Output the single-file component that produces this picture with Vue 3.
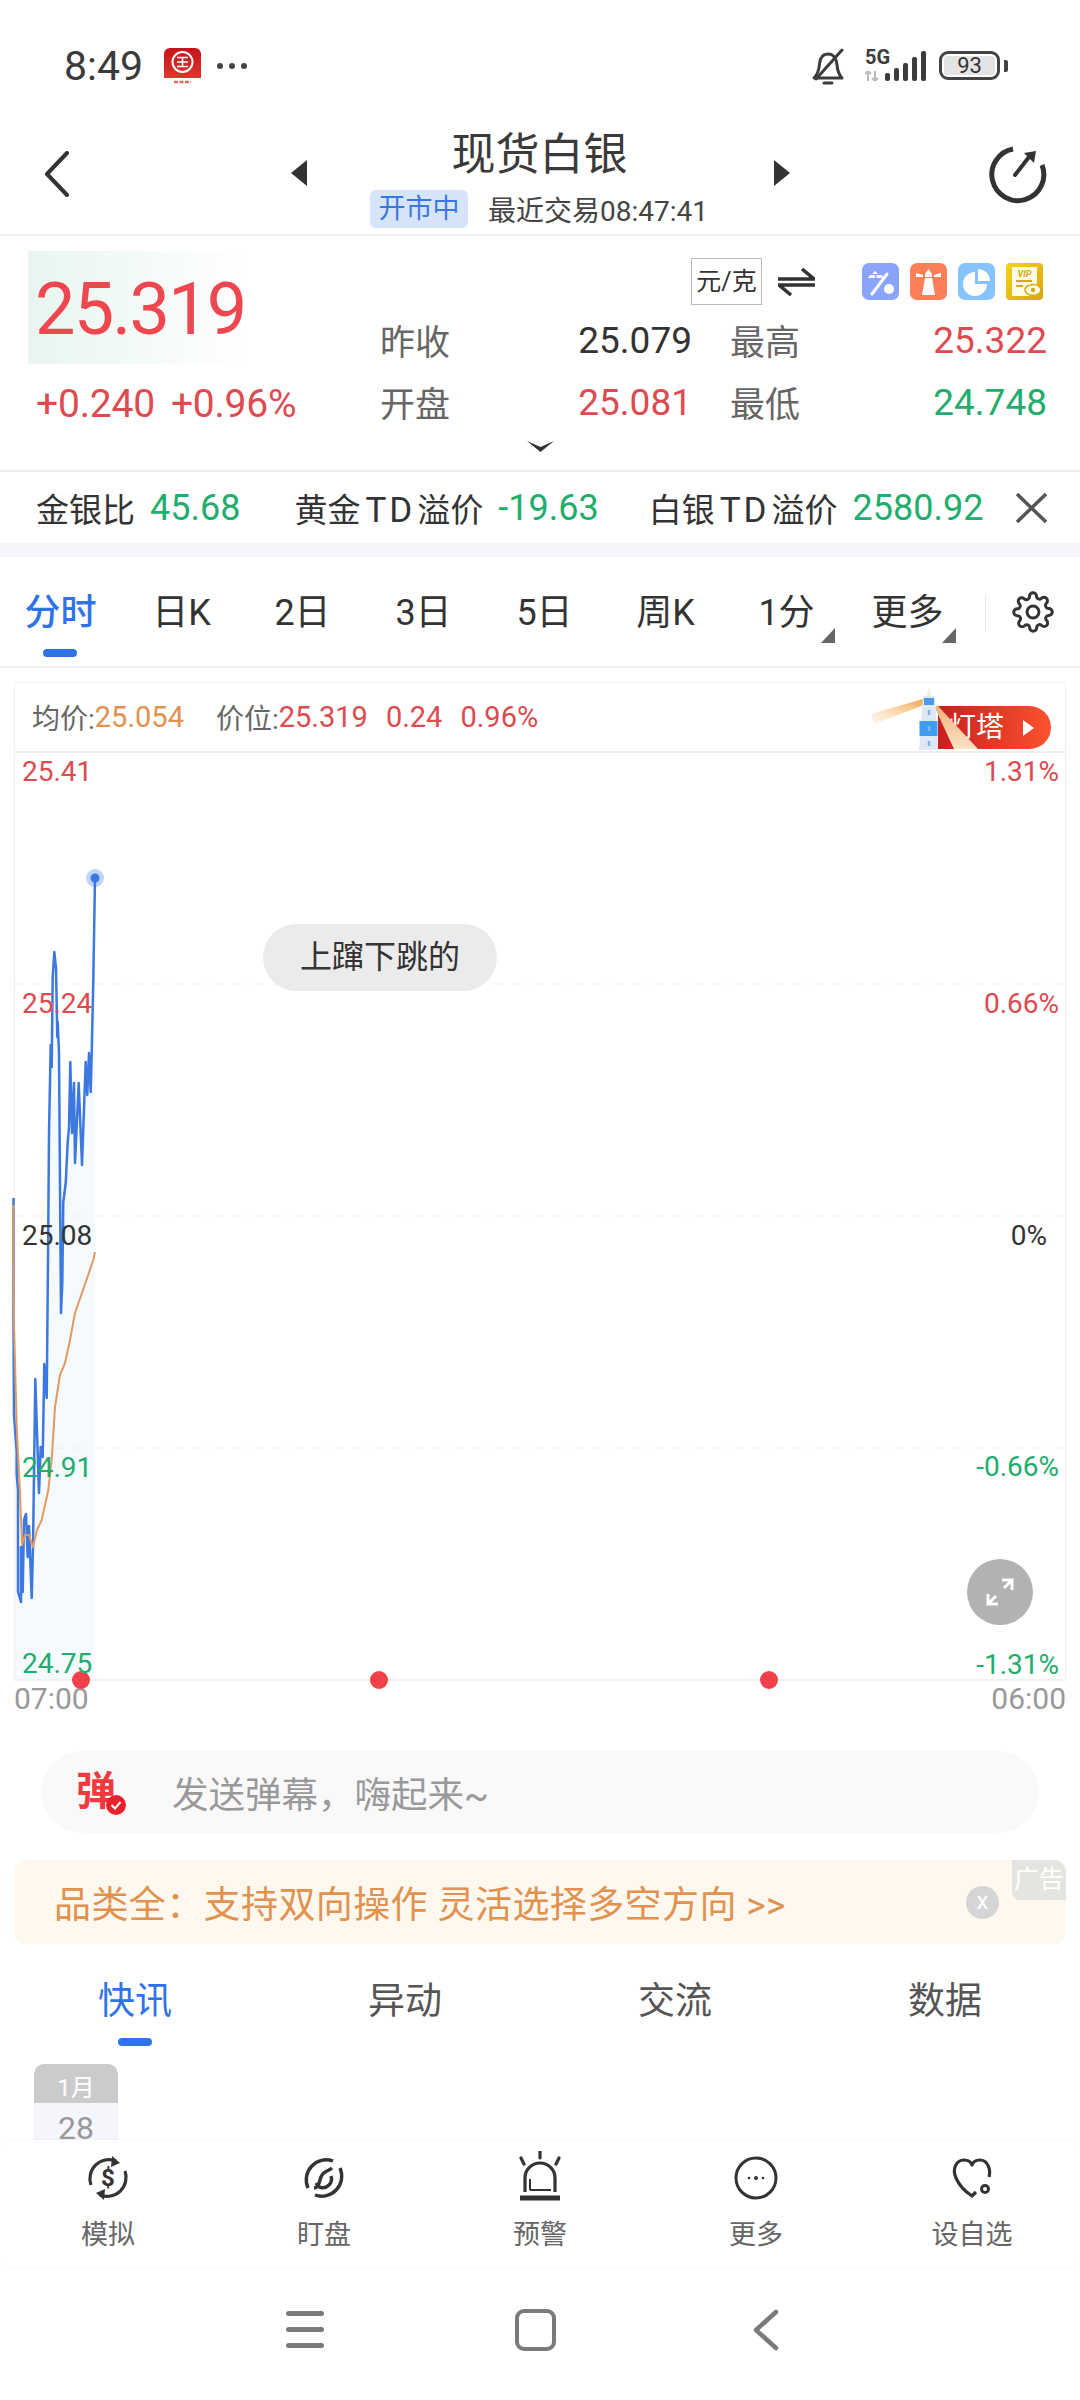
<template>
  <div class="page">
    <!-- 状态栏 -->
    <div class="status">
      <span class="clock">8:49</span>
      <svg class="app-icon" width="37" height="37" viewBox="0 0 37 37">
        <defs>
          <linearGradient id="appRed" x1="0" y1="0" x2="0" y2="1">
            <stop offset="0" stop-color="#c8101a" />
            <stop offset="1" stop-color="#d93a2c" />
          </linearGradient>
        </defs>
        <path d="M6 0H31A6 6 0 0 1 37 6V30H0V6A6 6 0 0 1 6 0Z" fill="url(#appRed)" />
        <circle cx="18.5" cy="14" r="10" fill="none" stroke="#fff" stroke-width="2" />
        <path d="M13 9.5H24M13 14H24M13 18.5H24M18.5 9.5V18.5" stroke="#fff" stroke-width="1.6" fill="none" />
        <path d="M10 34H27" stroke="#e3685c" stroke-width="2.4" stroke-dasharray="4 1.5" />
      </svg>
      <span class="dots"><i></i><i></i><i></i></span>
      <div class="status-right">
        <svg width="36" height="38" viewBox="0 0 36 38" fill="none" stroke="#3c3c3c" stroke-width="3" stroke-linecap="round" stroke-linejoin="round">
          <path d="M3 30H31C27 26 26.500 22 26 17C25.500 10 22 6 17 6C12 6 9 10 8.500 16C8 22 7 26 3 30Z" />
          <path d="M13 35H21" />
          <path d="M5 31L31 2" />
        </svg>
        <div class="net">
          <div class="net-type">
            <b>5G</b>
            <svg width="14" height="10" viewBox="0 0 14 10"><path d="M3 10V0M0 3L3 0L6 3M10 0V10M7 7L10 10L13 7" stroke="#bbb" stroke-width="2" fill="none" /></svg>
          </div>
          <div class="bars"><i class="b1"></i><i class="b2"></i><i class="b3"></i><i class="b4"></i><i class="b5"></i></div>
        </div>
        <div class="battery"><span>93</span></div>
        <i class="battery-nub"></i>
      </div>
    </div>

    <!-- 标题栏 -->
    <div class="nav">
      <svg class="back" width="26" height="46" viewBox="0 0 26 46" fill="none" stroke="#333" stroke-width="4" stroke-linecap="round" stroke-linejoin="round"><path d="M23 2L3 23L23 44" /></svg>
      <i class="tri tri-left"></i>
      <div class="nav-center">
        <div class="title">现货白银</div>
        <div class="subtitle">
          <span class="state">开市中</span>
          <span class="last">最近交易08:47:41</span>
        </div>
      </div>
      <i class="tri tri-right"></i>
      <svg class="refresh" width="58" height="58" viewBox="0 0 58 58" fill="none" stroke="#333" stroke-width="5">
        <path d="M24 3A26 26 0 1 0 53 19" />
        <path d="M26 29L40 11" stroke-width="4" stroke-linecap="round" />
        <path d="M35 7L47 5L45 17Z" fill="#333" stroke="none" />
      </svg>
    </div>

    <!-- 行情 -->
    <div class="quote">
      <div class="quote-left">
        <div class="price-box"><span class="price">25.319</span></div>
        <div class="change">
          <span>+0.240</span>
          <span>+0.96%</span>
        </div>
      </div>
      <div class="quote-right">
        <div class="tools">
          <span class="unit">元/克</span>
          <svg class="swap" width="37" height="28" viewBox="0 0 37 28" fill="none" stroke="#333" stroke-width="3.500">
            <path d="M0 11H36L24 1" />
            <path d="M37 17H1L13 27" />
          </svg>
          <div class="tool-icons">
            <svg width="37" height="37" viewBox="0 0 37 37">
              <rect width="37" height="37" rx="7" fill="#8aa4fb" />
              <path d="M13 8L16 11H10ZM8 12H13V15H6ZM14.500 12H20L21 15H14.500Z" fill="#fff" />
              <path d="M25 11L10 31" stroke="#fff" stroke-width="3" stroke-linecap="round" />
              <circle cx="27" cy="26" r="5" fill="#fff" />
            </svg>
            <svg width="37" height="37" viewBox="0 0 37 37">
              <rect width="37" height="37" rx="7" fill="#fb7f57" />
              <path d="M18.500 6L22 11V14H15V11Z" fill="#fff" />
              <path d="M15 15H22L25 32H12Z" fill="#fff" />
              <path d="M6 10L13 12V14L6 14ZM31 10L24 12V14L31 14Z" fill="#fff" />
            </svg>
            <svg width="37" height="37" viewBox="0 0 37 37">
              <rect width="37" height="37" rx="7" fill="#87c3fd" />
              <path d="M17 9V21H29A12 12 0 1 1 17 9Z" fill="#fff" />
              <path d="M20 6A12 12 0 0 1 32 18H20Z" fill="#fff" />
            </svg>
            <svg width="37" height="37" viewBox="0 0 37 37">
              <defs>
                <linearGradient id="vipGold" x1="0" y1="0" x2="1" y2="1">
                  <stop offset="0" stop-color="#f6d21c" />
                  <stop offset="1" stop-color="#d8a70d" />
                </linearGradient>
              </defs>
              <rect width="37" height="37" rx="4" fill="url(#vipGold)" />
              <rect x="6" y="4" width="25" height="29" fill="#fffbe6" />
              <text x="18.500" y="14" font-size="9" font-weight="700" font-style="italic" text-anchor="middle" fill="#d8a70d" font-family="Roboto">VIP</text>
              <path d="M10 18H26M10 23H17" stroke="#d8a70d" stroke-width="1.800" />
              <ellipse cx="27" cy="27" rx="8" ry="5.500" fill="#fffbe6" stroke="#d8a70d" stroke-width="1.500" />
              <circle cx="27" cy="27" r="2.200" fill="#d8a70d" />
            </svg>
          </div>
        </div>
        <div class="stats">
          <template v-for="s in stats" :key="s.label">
            <span class="stat-label">{{ s.label }}</span>
            <span class="stat-value" :class="s.color">{{ s.value }}</span>
          </template>
        </div>
      </div>
      <svg class="expand-more" width="27" height="11" viewBox="0 0 27 11"><path d="M0 0L13.500 6L27 0L13.500 11Z" fill="#333" /></svg>
    </div>

    <!-- 比价 -->
    <div class="ratio">
      <span class="ratio-label">金银比</span><span class="ratio-value first">45.68</span>
      <span class="ratio-label">黄金<span class="td">TD</span>溢价</span><span class="ratio-value">-19.63</span>
      <span class="ratio-label">白银<span class="td">TD</span>溢价</span><span class="ratio-value">2580.92</span>
      <svg class="ratio-close" width="31" height="30" viewBox="0 0 31 30" stroke="#555" stroke-width="3.500" fill="none"><path d="M1 1L30 29M30 1L1 29" /></svg>
    </div>
    <div class="band"></div>

    <!-- 周期 -->
    <div class="periods">
      <div class="period-list">
        <span v-for="p in periods" :key="p.text" class="period" :class="{ active: p.active, drop: p.drop }">{{ p.text }}</span>
      </div>
      <i class="period-sep"></i>
      <svg class="gear" width="42" height="44" viewBox="0 0 24 24" fill="none" stroke="#333" stroke-width="1.700" stroke-linejoin="round">
        <circle cx="12" cy="12" r="3.400" />
        <path d="M19.400 15a1.650 1.650 0 0 0 .33 1.820l.06.06a2 2 0 1 1-2.830 2.830l-.06-.06a1.650 1.650 0 0 0-2.800 1.170V21a2 2 0 0 1-4 0v-.09a1.650 1.650 0 0 0-2.830-1.120l-.06.06a2 2 0 1 1-2.830-2.830l.06-.06a1.650 1.650 0 0 0-1.170-2.800H3a2 2 0 0 1 0-4h.09a1.650 1.650 0 0 0 1.120-2.830l-.06-.06a2 2 0 1 1 2.830-2.830l.06.06a1.650 1.650 0 0 0 1.820.33H9a1.650 1.650 0 0 0 1-1.510V3a2 2 0 0 1 4 0v.09a1.650 1.650 0 0 0 2.800 1.120l.06-.06a2 2 0 1 1 2.830 2.830l-.06.06a1.650 1.650 0 0 0-.33 1.820V9a1.650 1.650 0 0 0 1.510 1H21a2 2 0 0 1 0 4h-.09a1.650 1.650 0 0 0-1.510 1z" />
      </svg>
    </div>

    <!-- 分时图 -->
    <div class="chart">
      <div class="chart-info">
        <span class="info-label">均价:</span><span class="orange">25.054</span>
        <span class="info-label second">价位:</span><span class="red">25.319</span>
        <span class="red info-gap">0.24</span>
        <span class="red info-gap">0.96%</span>
        <div class="tower-btn">
          <span>灯塔</span>
          <i class="tower-arrow"></i>
          <svg class="tower" width="160" height="62" viewBox="0 0 160 62">
            <defs>
              <linearGradient id="beamL" x1="1" y1="0" x2="0" y2="1">
                <stop offset="0" stop-color="#f2a64a" />
                <stop offset="1" stop-color="#fdf0de" stop-opacity="0.5" />
              </linearGradient>
              <linearGradient id="beamR" x1="0" y1="0" x2="0" y2="1">
                <stop offset="0" stop-color="#eeb07c" />
                <stop offset="1" stop-color="#fde3c4" />
              </linearGradient>
            </defs>
            <path d="M103 11L51 26L54 36L104 17Z" fill="url(#beamL)" />
            <path d="M115 20L134 61H158L117 17Z" fill="url(#beamR)" />
            <path d="M109 0L112 8H106Z" fill="#f4efe3" />
            <path d="M103 8H115L118 62H99Z" fill="#dfe9f5" />
            <rect x="104" y="10" width="10" height="7" fill="#4a9ceb" />
            <rect x="99.500" y="33" width="18" height="15" fill="#3f9cef" />
            <path d="M109 22V27M109 38V43M109 53V58" stroke="#7eb8ee" stroke-width="2.500" />
          </svg>
        </div>
      </div>
      <div class="plot">
        <svg class="plot-svg" width="1052" height="930" viewBox="14 751 1052 930">
          <polygon :points="areaPoints" fill="#f5faff" />
          <path d="M14.500 751V1681M1065.500 751V1681" stroke="#f0f0f0" stroke-width="1" />
          <path d="M14 752H1066" stroke="#eee" stroke-width="2" />
          <path v-for="y in gridLines" :key="y" :d="`M14 ${y}H1066`" stroke="#ececec" stroke-width="1" stroke-dasharray="9 11" />
          <path d="M14 1680H1066" stroke="#f0f0f0" stroke-width="2" />
          <polyline :points="bluePoints" fill="none" stroke="#3d78e0" stroke-width="2.500" stroke-linejoin="round" />
          <polyline :points="orangePoints" fill="none" stroke="#e29a60" stroke-width="2" stroke-linejoin="round" />
          <circle cx="95" cy="878" r="9" fill="#3d78e0" fill-opacity="0.32" />
          <circle cx="95" cy="878" r="4.500" fill="#3d78e0" />
          <circle v-for="x in redDots" :key="x" :cx="x" cy="1680" r="9" fill="#f2404a" />
        </svg>
        <span v-for="l in leftLabels" :key="l.text" class="axis axis-left" :class="l.color" :style="{ top: l.y - 765 + 'px' }">{{ l.text }}</span>
        <span v-for="l in rightLabels" :key="l.text" class="axis" :class="l.color" :style="{ top: l.y - 765 + 'px', right: l.right + 'px' }">{{ l.text }}</span>
        <div class="float-pill">上蹿下跳的</div>
        <div class="fullscreen">
          <svg width="30" height="30" viewBox="0 0 30 30" fill="none" stroke="#fff" stroke-width="3">
            <path d="M3 27L11 19M19 11L27 3M17 3H27V13M3 17V27H13" />
          </svg>
        </div>
      </div>
      <div class="time-axis"><span>07:00</span><span>06:00</span></div>
    </div>

    <!-- 弹幕 -->
    <div class="danmu">
      <span class="danmu-icon">弹
        <svg width="20" height="20" viewBox="0 0 20 20">
          <circle cx="10" cy="10" r="10" fill="#e8232b" />
          <path d="M5.500 10L9 13.500L14.500 7" stroke="#fff" stroke-width="2" fill="none" />
        </svg>
      </span>
      <span class="danmu-text">发送弹幕，嗨起来~</span>
    </div>

    <!-- 广告 -->
    <div class="ad">
      <span class="ad-text">品类全：支持双向操作 灵活选择多空方向 &gt;&gt;</span>
      <span class="ad-close">x</span>
      <span class="ad-tag">广告</span>
    </div>

    <!-- 资讯 -->
    <div class="news-tabs">
      <span v-for="t in newsTabs" :key="t" class="news-tab" :class="{ active: t === '快讯' }">{{ t }}</span>
    </div>
    <div class="news">
      <div class="date">
        <div class="date-month">1月</div>
        <div class="date-day">28</div>
      </div>
    </div>

    <!-- 底部工具栏 -->
    <div class="toolbar">
      <div class="tool">
        <svg width="46" height="46" viewBox="0 0 46 46" fill="none" stroke="#333" stroke-width="3.200">
          <path d="M6 30A19 19 0 0 1 31 6" />
          <path d="M40 16A19 19 0 0 1 15 40" />
          <path d="M27 1L35 8L26 12Z" fill="#333" stroke="none" />
          <path d="M19 45L11 38L20 34Z" fill="#333" stroke="none" />
          <text x="23" y="31" font-size="24" font-weight="700" text-anchor="middle" fill="#333" stroke="none" font-family="Roboto">$</text>
        </svg>
        <span>模拟</span>
      </div>
      <div class="tool">
        <svg width="46" height="46" viewBox="0 0 46 46" fill="none" stroke="#333" stroke-width="3.400">
          <path d="M32 6A20 20 0 0 0 7 33" />
          <path d="M14 40A20 20 0 0 0 39 13" />
          <path d="M13 33C18 33 18 27 20 22C22 16 28 16 31 13" />
          <path d="M15 28C18 34 24 34 28 30C31 27 31 24 30 21" />
        </svg>
        <span>盯盘</span>
      </div>
      <div class="tool">
        <svg class="alarm" width="46" height="50" viewBox="0 0 46 50" fill="none" stroke="#333" stroke-width="3.200">
          <path d="M23 0V7M4 7L7 13M42 7L39 13" stroke-linecap="round" />
          <path d="M8 41V27A15 15 0 0 1 38 27V41" />
          <path d="M13 39V28" stroke-width="2" />
          <path d="M13 39H34" stroke-width="2" />
          <path d="M3 47H43" stroke-width="5" />
        </svg>
        <span>预警</span>
      </div>
      <div class="tool">
        <svg width="46" height="46" viewBox="0 0 46 46" fill="none" stroke="#333" stroke-width="3">
          <circle cx="23" cy="23" r="20" />
          <circle cx="16" cy="23" r="1.300" fill="#333" stroke="none" />
          <circle cx="23" cy="23" r="2" fill="#333" stroke="none" />
          <circle cx="30" cy="23" r="1.300" fill="#333" stroke="none" />
        </svg>
        <span>更多</span>
      </div>
      <div class="tool">
        <svg width="46" height="46" viewBox="0 0 46 46" fill="none" stroke="#333" stroke-width="3.200" stroke-linejoin="round">
          <path d="M40 22C42 15 39 5 31 5C27 5 24 7 23 10C22 7 19 5 15 5C7 5 3 14 7 23C10 30 17 37 23 41L27 37" />
          <circle cx="36" cy="34" r="3.500" stroke-width="3" />
        </svg>
        <span>设自选</span>
      </div>
    </div>

    <!-- 系统导航 -->
    <div class="sys-nav">
      <div class="menu-icon"><i></i><i></i><i></i></div>
      <i class="home-icon"></i>
      <svg width="26" height="42" viewBox="0 0 26 42" fill="none" stroke="#7a7a7a" stroke-width="4.500" stroke-linecap="round" stroke-linejoin="round"><path d="M23 3L3 21L23 39" /></svg>
    </div>
  </div>
</template>

<script setup>
const stats = [
  { label: '昨收', value: '25.079', color: 'dark' },
  { label: '最高', value: '25.322', color: 'red' },
  { label: '开盘', value: '25.081', color: 'red' },
  { label: '最低', value: '24.748', color: 'green' }
]

const periods = [
  { text: '分时', active: true },
  { text: '日K' },
  { text: '2日' },
  { text: '3日' },
  { text: '5日' },
  { text: '周K' },
  { text: '1分', drop: true },
  { text: '更多', drop: true }
]

const newsTabs = ['快讯', '异动', '交流', '数据']

const gridLines = [984, 1216, 1448]
const redDots = [81, 379, 769]

const leftLabels = [
  { text: '25.41', y: 772, color: 'red' },
  { text: '25.24', y: 1004, color: 'red' },
  { text: '25.08', y: 1236, color: 'dark' },
  { text: '24.91', y: 1468, color: 'green' },
  { text: '24.75', y: 1664, color: 'green' }
]

const rightLabels = [
  { text: '1.31%', y: 772, color: 'red', right: 7 },
  { text: '0.66%', y: 1004, color: 'red', right: 7 },
  { text: '0%', y: 1236, color: 'dark', right: 19 },
  { text: '-0.66%', y: 1467, color: 'green', right: 7 },
  { text: '-1.31%', y: 1665, color: 'green', right: 7 }
]

// 价格线、均价线（页面坐标）
const blueLine = [
  [13.5, 1198], [13.5, 1323], [14, 1415], [16.7, 1452], [16.7, 1475], [18, 1490], [18, 1592],
  [21, 1602], [21, 1547], [22.7, 1592], [24, 1520], [26, 1514], [27.7, 1557], [29, 1526],
  [31.7, 1598], [33, 1547], [35.3, 1379], [39, 1493], [40.7, 1447], [42.7, 1457], [44.3, 1364],
  [45.7, 1387], [46.7, 1398], [48, 1260], [49, 1133], [50.7, 1045], [51.7, 1067], [52.7, 977],
  [54.3, 952], [56, 968], [57.3, 1037], [57.7, 1022], [59, 1053], [61, 1313], [62.3, 1283],
  [63.3, 1202], [65.7, 1183], [67.7, 1142], [69, 1127], [70.3, 1062], [72, 1133], [74, 1083],
  [75, 1163], [78.7, 1083], [82, 1165], [84.3, 1100], [85.7, 1062], [87.3, 1095], [89, 1053],
  [90.7, 1092], [91.7, 1053], [93.3, 980], [95, 878]
]

const orangeLine = [
  [13.5, 1205], [13.5, 1260], [14, 1323], [16.7, 1427], [20, 1493], [22, 1545], [25, 1535],
  [29, 1535], [33, 1547], [37, 1530], [41.7, 1520], [48.3, 1490], [51.7, 1460], [55, 1407],
  [60, 1375], [65, 1363], [70, 1340], [75, 1313], [83, 1290], [93.3, 1260], [95, 1252]
]

const toPoints = (line) => line.map(([x, y]) => `${x},${y}`).join(' ')

const bluePoints = toPoints(blueLine)
const orangePoints = toPoints(orangeLine)
const areaPoints = `${bluePoints} 95,1680 14,1680`
</script>

<style>
html,
body {
  margin: 0;
  background: #fff;
}
</style>

<style scoped>
.page {
  width: 1080px;
  height: 2400px;
  overflow: hidden;
  background: #fff;
  color: #333;
  font-family: Roboto, "Noto Sans CJK SC", sans-serif;
}

.red { color: #dd4a50; }
.green { color: #22ad6d; }
.dark { color: #333; }
.orange { color: #e2914f; }

/* 状态栏 */
.status {
  height: 100px;
  display: flex;
  align-items: flex-start;
  padding: 48px 72px 0 64px;
  box-sizing: border-box;
}

.clock {
  font-size: 41px;
  line-height: 37px;
  color: #3a3a3a;
  width: 100px;
}

.app-icon {
  flex: none;
}

.dots {
  display: flex;
  gap: 6px;
  margin: 15px 0 0 16px;
}

.dots i {
  width: 6px;
  height: 6px;
  border-radius: 50%;
  background: #444;
}

.status-right {
  margin-left: auto;
  display: flex;
  align-items: flex-start;
}

.net {
  display: flex;
  margin-left: 18px;
  align-items: flex-end;
  height: 33px;
}

.net-type {
  display: flex;
  flex-direction: column;
  width: 29px;
}

.net-type b {
  font-size: 20px;
  line-height: 19px;
  color: #3c3c3c;
  margin-bottom: 4px;
}

.bars {
  display: flex;
  align-items: flex-end;
  gap: 4px;
  margin-left: -9px;
  height: 33px;
}

.bars i {
  width: 5px;
  background: #3c3c3c;
  border-radius: 2px;
}

.b1 { height: 8px; }
.b2 { height: 13px; }
.b3 { height: 18px; }
.b4 { height: 24px; }
.b5 { height: 30px; }

.battery {
  width: 61px;
  height: 29px;
  box-sizing: border-box;
  border: 3px solid #444;
  border-radius: 9px;
  padding: 2px;
  margin: 3px 0 0 13px;
  display: flex;
}

.battery span {
  flex: 1;
  background: #e4e4e4;
  border-radius: 3px;
  font-size: 22px;
  line-height: 19px;
  text-align: center;
  color: #333;
}

.battery-nub {
  width: 4px;
  height: 12px;
  margin: 12px 0 0 4px;
  background: #444;
  border-radius: 0 2px 2px 0;
}

/* 标题栏 */
.nav {
  height: 136px;
  box-sizing: border-box;
  border-bottom: 2px solid #f2f2f2;
  display: flex;
  align-items: flex-start;
  position: relative;
}

.back {
  margin: 51px 0 0 44px;
}

.tri {
  width: 0;
  height: 0;
  border-top: 13px solid transparent;
  border-bottom: 13px solid transparent;
  margin-top: 60px;
}

.tri-left {
  border-right: 16px solid #333;
  margin-left: 221px;
}

.tri-right {
  border-left: 16px solid #333;
}

.nav-center {
  width: 467px;
  display: flex;
  flex-direction: column;
  align-items: center;
  padding-top: 29px;
}

.title {
  font-size: 44px;
  line-height: 52px;
  color: #3a3a3a;
  margin-left: -2px;
}

.subtitle {
  display: flex;
  align-items: center;
  margin: 8px 0 0 -3px;
}

.state {
  width: 98px;
  height: 38px;
  border-radius: 6px;
  background: #d6e4fa;
  color: #3a78dc;
  font-size: 27px;
  line-height: 38px;
  text-align: center;
}

.last {
  font-size: 28px;
  margin-left: 20px;
  color: #444;
}

.refresh {
  margin: 46px 0 0 199px;
}

/* 行情 */
.quote {
  height: 236px;
  box-sizing: border-box;
  border-bottom: 2px solid #ececec;
  display: flex;
  position: relative;
}

.quote-left {
  width: 380px;
  padding: 15px 0 0 28px;
  box-sizing: border-box;
}

.price-box {
  width: 220px;
  height: 113px;
  background: linear-gradient(90deg, #e8f6ef, #fff);
  padding: 2px 0 0 7px;
  box-sizing: border-box;
}

.price {
  font-size: 72px;
  letter-spacing: -1.800px;
  line-height: 113px;
  color: #ef474f;
}

.change {
  display: flex;
  gap: 16px;
  padding: 18px 0 0 8px;
  font-size: 39px;
  line-height: 44px;
  letter-spacing: -0.2px;
  color: #dd4a50;
}

.quote-right {
  width: 667px;
}

.tools {
  display: flex;
  align-items: center;
  height: 47px;
  margin-top: 22px;
  padding-left: 311px;
}

.unit {
  width: 71px;
  height: 47px;
  box-sizing: border-box;
  border: 1px solid #bbb;
  font-size: 25px;
  line-height: 45px;
  text-align: center;
  color: #333;
}

.swap {
  margin-left: 16px;
}

.tool-icons {
  display: flex;
  gap: 11px;
  margin-left: 47px;
}

.stats {
  display: grid;
  grid-template-columns: 101px 211px 108px 247px;
  grid-template-rows: 62px 62px;
  column-gap: 0;
  margin-top: 3px;
  align-items: center;
}

.stat-label {
  font-size: 35px;
  color: #666;
}

.stat-label:nth-child(4n + 3) {
  margin-left: 38px;
}

.stat-value {
  font-size: 37px;
  text-align: right;
  padding-top: 2px;
}

.stats .stat-label:nth-child(4n + 3) {
  grid-column: 3;
}

.expand-more {
  position: absolute;
  left: 527px;
  top: 205px;
}

/* 比价 */
.ratio {
  height: 71px;
  display: flex;
  align-items: center;
  padding: 0 33px 0 36px;
  font-size: 33px;
}

.ratio-label {
  color: #333;
  white-space: nowrap;
}

.td {
  font-size: 35px;
  letter-spacing: 3px;
  margin: 0 2px 0 5px;
}

.ratio-value {
  font-size: 36px;
  color: #22ad6d;
  margin: 0 50px 0 15px;
}

.ratio-value.first {
  margin-right: 54px;
}

.ratio-value:nth-of-type(6) {
  margin-right: 0;
}

.ratio-close {
  margin-left: auto;
}

.band {
  height: 14px;
  background: #f5f6fb;
}

/* 周期 */
.periods {
  height: 111px;
  box-sizing: border-box;
  border-bottom: 2px solid #f2f2f2;
  display: flex;
  align-items: flex-start;
}

.period-list {
  display: grid;
  grid-template-columns: repeat(8, 121px);
  padding-top: 32px;
}

.period {
  position: relative;
  font-size: 36px;
  line-height: 48px;
  text-align: center;
  color: #333;
}

.period.active {
  color: #2f74e6;
  font-weight: 500;
}

.period.active::after {
  content: '';
  position: absolute;
  left: 43px;
  top: 60px;
  width: 34px;
  height: 8px;
  border-radius: 4px;
  background: #2f74e6;
}

.period.drop::after {
  content: '';
  position: absolute;
  right: 12px;
  bottom: -6px;
  width: 14px;
  height: 15px;
  background: #666;
  clip-path: polygon(100% 0, 100% 100%, 0 100%);
}

.period-sep {
  width: 1px;
  height: 36px;
  margin: 38px 0 0 17px;
  background: #e8e8e8;
}

.gear {
  margin: 33px 0 0 26px;
}

/* 分时图 */
.chart {
  margin: 14px 14px 0;
}

.chart-info {
  height: 69px;
  box-sizing: border-box;
  border: 1px solid #f0f0f0;
  border-bottom: none;
  display: flex;
  align-items: center;
  padding: 0 0 0 17px;
  font-size: 29px;
  position: relative;
}

.info-label {
  font-size: 28px;
  color: #666;
}

.info-label.second {
  margin-left: 32px;
}

.info-gap {
  margin-left: 18px;
}

.tower-btn {
  position: absolute;
  left: 923px;
  top: 23px;
  width: 113px;
  height: 43px;
  box-sizing: border-box;
  border-radius: 0 22px 22px 0;
  background: linear-gradient(90deg, #c8201e, #fb5230);
  color: #fff;
  font-size: 28px;
  line-height: 43px;
  padding-left: 10px;
}

.tower-arrow {
  position: absolute;
  right: 17px;
  top: 14px;
  width: 0;
  height: 0;
  border-top: 8px solid transparent;
  border-bottom: 8px solid transparent;
  border-left: 11px solid #fff;
}

.tower {
  position: absolute;
  left: -118px;
  top: -18px;
}

.plot {
  position: relative;
  height: 930px;
}

.plot-svg {
  display: block;
  overflow: visible;
  position: relative;
}

.axis {
  position: absolute;
  font-size: 28px;
  line-height: 28px;
}

.axis-left {
  left: 8px;
}

.float-pill {
  position: absolute;
  left: 249px;
  top: 173px;
  width: 234px;
  height: 67px;
  border-radius: 34px;
  background: #ebebeb;
  font-size: 32px;
  line-height: 67px;
  text-align: center;
  color: #333;
}

.fullscreen {
  position: absolute;
  left: 953px;
  top: 808px;
  width: 66px;
  height: 66px;
  border-radius: 50%;
  background: #b2b2b2;
  display: flex;
  align-items: center;
  justify-content: center;
}

.time-axis {
  display: flex;
  justify-content: space-between;
  font-size: 30px;
  line-height: 36px;
  color: #999;
}

/* 弹幕 */
.danmu {
  width: 998px;
  height: 82px;
  margin: 34px 0 0 41px;
  border-radius: 41px;
  background: #f9f9f9;
  display: flex;
  align-items: center;
}

.danmu-icon {
  position: relative;
  margin-left: 35px;
  width: 50px;
  font-size: 40px;
  line-height: 46px;
  font-weight: 700;
  color: #ee3b3f;
}

.danmu-icon svg {
  position: absolute;
  right: 0;
  bottom: 0;
}

.danmu-text {
  margin-left: 46px;
  font-size: 36.500px;
  color: #999;
}

/* 广告 */
.ad {
  position: relative;
  height: 84px;
  margin: 27px 14px 0;
  border-radius: 12px;
  background: #fef8ef;
  display: flex;
  align-items: center;
  padding-left: 40px;
}

.ad-text {
  font-size: 37px;
  letter-spacing: 0.4px;
  color: #e2914f;
}

.ad-close {
  position: absolute;
  left: 952px;
  top: 26px;
  width: 33px;
  height: 33px;
  border-radius: 50%;
  background: #d5d5d5;
  color: #fff;
  font-size: 24px;
  line-height: 30px;
  text-align: center;
}

.ad-tag {
  position: absolute;
  right: 0;
  top: 0;
  width: 54px;
  height: 40px;
  border-radius: 0 12px 0 8px;
  background: #e6e4e0;
  color: #fff;
  font-size: 25px;
  line-height: 40px;
  text-align: center;
}

/* 资讯 */
.news-tabs {
  display: grid;
  grid-template-columns: repeat(4, 270px);
  height: 120px;
  box-sizing: border-box;
  padding-top: 33px;
}

.news-tab {
  position: relative;
  font-size: 37px;
  line-height: 50px;
  text-align: center;
  color: #555;
}

.news-tab.active {
  color: #2f74e6;
}

.news-tab.active::after {
  content: '';
  position: absolute;
  left: 118px;
  top: 61px;
  width: 34px;
  height: 8px;
  border-radius: 4px;
  background: #2f74e6;
}

.news {
  height: 76px;
  overflow: hidden;
  padding-left: 34px;
}

.date {
  width: 84px;
}

.date-month {
  height: 39px;
  border-radius: 10px 10px 0 0;
  background: #cbcbcb;
  color: #fff;
  font-size: 24px;
  line-height: 48px;
  text-align: center;
}

.date-day {
  height: 60px;
  background: #f5f6fb;
  color: #999;
  font-size: 32px;
  line-height: 50px;
  text-align: center;
}

/* 底部工具栏 */
.toolbar {
  height: 127px;
  display: grid;
  grid-template-columns: repeat(5, 216px);
  align-items: start;
  border-radius: 8px;
  box-shadow: 0 0 3px rgba(0, 0, 0, 0.06);
}

.tool {
  display: flex;
  flex-direction: column;
  align-items: center;
  padding-top: 15px;
  height: 127px;
  box-sizing: border-box;
  font-size: 27px;
  color: #666;
}

.tool svg {
  height: 46px;
  flex: none;
}

.tool svg.alarm {
  height: 50px;
  margin-top: -4px;
}

.tool span {
  margin-top: 18px;
  line-height: 32px;
}

/* 系统导航 */
.sys-nav {
  height: 133px;
  display: flex;
  align-items: flex-start;
  padding: 42px 0 0 286px;
  box-sizing: border-box;
}

.menu-icon {
  width: 38px;
  height: 37px;
  display: flex;
  flex-direction: column;
  justify-content: space-between;
  margin-top: 2px;
}

.menu-icon i {
  height: 5px;
  border-radius: 3px;
  background: #7a7a7a;
}

.home-icon {
  width: 41px;
  height: 42px;
  box-sizing: border-box;
  border: 4px solid #7a7a7a;
  border-radius: 9px;
  margin-left: 191px;
}

.sys-nav svg {
  margin-left: 197px;
}
</style>
